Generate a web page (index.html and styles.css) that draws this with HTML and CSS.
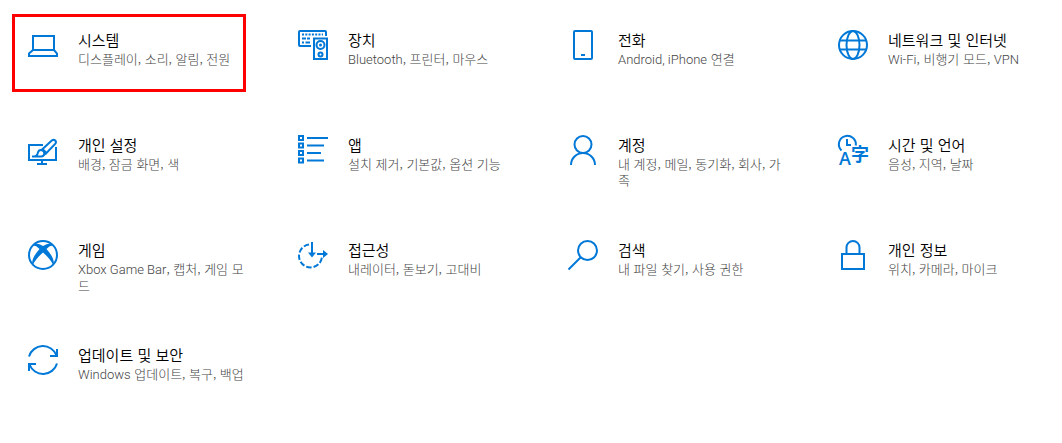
FILE: index.html
```html
<!DOCTYPE html>
<html lang="ko">
<head>
<meta charset="utf-8">
<meta name="viewport" content="width=device-width, initial-scale=1">
<title>Windows 설정</title>
<link rel="stylesheet" href="styles.css">
</head>
<body>
<main class="settings">
  <a class="tile tile-selected" href="#system">
    <svg class="icon" viewBox="0 0 30 30" aria-hidden="true"><path d="M5 6h21v14H5zM5 20l-4 3.500V26h28v-2.500L26 20"/></svg>
    <span class="label"><span class="title">시스템</span><span class="desc">디스플레이, 소리, 알림, 전원</span></span>
  </a>
  <a class="tile" href="#devices">
    <svg class="icon" viewBox="0 0 30 30" aria-hidden="true"><path d="M13 16H2q-1 0-1-1V2q0-1 1-1h25q1 0 1 1v4"/><path stroke-dasharray="2 1.3" d="M4 4.500h21"/><path d="M4 8.500h4M9 8.500h3M4 12.500h2M7.500 12.500H12M16 8.500h13V29H16z"/><circle cx="22.500" cy="15" r="4"/><circle class="solid" cx="22.500" cy="15" r="1.500"/><circle cx="22.500" cy="24.500" r="2"/></svg>
    <span class="label"><span class="title">장치</span><span class="desc"><span class="latin">Bluetooth</span>, 프린터, 마우스</span></span>
  </a>
  <a class="tile" href="#phone">
    <svg class="icon" viewBox="0 0 30 30" aria-hidden="true"><rect x="6" y="1" width="18" height="28" rx="1"/><path d="M13 25h4"/></svg>
    <span class="label"><span class="title">전화</span><span class="desc"><span class="latin">Android, iPhone</span> 연결</span></span>
  </a>
  <a class="tile" href="#network">
    <svg class="icon" viewBox="0 0 30 30" aria-hidden="true"><circle cx="15" cy="15" r="14"/><ellipse cx="15" cy="15" rx="6.500" ry="14"/><path d="M2 10.500h26M2 19.500h26"/></svg>
    <span class="label"><span class="title">네트워크 및 인터넷</span><span class="desc"><span class="latin">Wi-Fi</span>, 비행기 모드, <span class="latin">VPN</span></span></span>
  </a>
  <a class="tile" href="#personalization">
    <svg class="icon" viewBox="0 0 30 30" aria-hidden="true"><path d="M15 10H1v15h27V12M14 25v4M9 29h10"/><path d="M4 21.500h9a3.200 3.200 0 1 0-3-4c-.8 3-2 4-4 4M13 15.500l11-10.200q1.800-1.200 3.200.2t.2 3.200L17 19.500M15 14.500l3.500 3.500"/></svg>
    <span class="label"><span class="title">개인 설정</span><span class="desc">배경, 잠금 화면, 색</span></span>
  </a>
  <a class="tile" href="#apps">
    <svg class="icon" viewBox="0 0 30 30" aria-hidden="true"><path d="M1 1h4v4H1zM1 8.500h4v4H1zM1 16h4v4H1zM1 23.500h4v4H1zM9 3h21M9 10.500h17M9 18h14M9 25.500h17"/></svg>
    <span class="label"><span class="title">앱</span><span class="desc">설치 제거, 기본값, 옵션 기능</span></span>
  </a>
  <a class="tile" href="#accounts">
    <svg class="icon" viewBox="0 0 30 30" aria-hidden="true"><circle cx="15" cy="9.500" r="8.500"/><path d="M3 30a12 12 0 0 1 24 0"/></svg>
    <span class="label"><span class="title">계정</span><span class="desc">내 계정, 메일, 동기화, 회사, 가족</span></span>
  </a>
  <a class="tile" href="#time">
    <svg class="icon" viewBox="0 0 30 30" aria-hidden="true"><path d="M3.500 15.500A8.500 8.500 0 1 1 17.800 10.500M9 4v6h4"/><text class="glyph-latin" x="1" y="30">A</text><text class="glyph-han" x="13" y="26">字</text></svg>
    <span class="label"><span class="title">시간 및 언어</span><span class="desc">음성, 지역, 날짜</span></span>
  </a>
  <a class="tile" href="#gaming">
    <svg class="icon" viewBox="0 0 30 30" aria-hidden="true"><circle cx="15" cy="15" r="14"/><path class="solid" d="M6 4.500C9 2.800 12 4 15 6c3-2 6-3.200 9-1.500l1 1.500c-2-.8-4 .5-6.500 3C23 14 27 20 25.500 25.500 23 20 19 16 15 12.500 11 16 7 20 4.500 25.500 3 20 7 14 11.500 9 9 6.500 7 5.200 5 6z"/></svg>
    <span class="label"><span class="title">게임</span><span class="desc"><span class="latin">Xbox Game Bar</span>, 캡처, 게임 모드</span></span>
  </a>
  <a class="tile" href="#access">
    <svg class="icon" viewBox="0 0 30 30" aria-hidden="true"><path stroke-dasharray="5.500 2" d="M11 4.500a11.500 11.500 0 1 0 13 12"/><path d="M14 2v14M19 14h9"/><path class="solid" d="M10 12.500h8L14 17.500zM25 10v8l5-4z"/></svg>
    <span class="label"><span class="title">접근성</span><span class="desc">내레이터, 돋보기, 고대비</span></span>
  </a>
  <a class="tile" href="#search">
    <svg class="icon" viewBox="0 0 30 30" aria-hidden="true"><circle cx="19.500" cy="10.500" r="9.500"/><path d="M12.500 17.500L.5 29.500"/></svg>
    <span class="label"><span class="title">검색</span><span class="desc">내 파일 찾기, 사용 권한</span></span>
  </a>
  <a class="tile" href="#privacy">
    <svg class="icon" viewBox="0 0 30 30" aria-hidden="true"><path d="M4 14h22v15H4zM8.500 14V7.500a6.500 6.500 0 0 1 13 0V14"/></svg>
    <span class="label"><span class="title">개인 정보</span><span class="desc">위치, 카메라, 마이크</span></span>
  </a>
  <a class="tile" href="#update">
    <svg class="icon" viewBox="0 0 30 30" aria-hidden="true"><path d="M1 11.500a14.500 14.500 0 0 1 27.500-1M29 4v7h-7M29 18.500a14.500 14.500 0 0 1-27.500 1M1 26v-7h7"/></svg>
    <span class="label"><span class="title">업데이트 및 보안</span><span class="desc"><span class="latin">Windows</span> 업데이트, 복구, 백업</span></span>
  </a>
</main>
</body>
</html>
```
FILE: styles.css
```css
body {
  margin: 0;
  background: #fff;
  color: #000;
  font-family: "Noto Sans CJK KR", sans-serif;
}

.settings {
  display: grid;
  grid-template-columns: repeat(4, 1fr);
  grid-auto-rows: minmax(78px, auto);
  gap: 27px 36px;
  padding: 14px 6px 14px 12px;
}

.tile {
  box-sizing: border-box;
  display: flex;
  align-items: flex-start;
  gap: 20px;
  padding: 13px 0 0 13px;
  border: 3px solid transparent;
  color: inherit;
  text-decoration: none;
}

.tile-selected {
  border-color: #f00;
}

.icon {
  flex: none;
  width: 30px;
  height: 30px;
  overflow: visible;
  fill: none;
  stroke: #0078d7;
  stroke-width: 2;
}

.icon .solid {
  fill: #0078d7;
  stroke: none;
}

.glyph-latin,
.glyph-han {
  fill: #0078d7;
  stroke: none;
}

.glyph-latin {
  font-family: "Open Sans", sans-serif;
  font-size: 18px;
  font-weight: 600;
}

.glyph-han {
  font-family: "Noto Sans CJK KR", sans-serif;
  font-size: 18px;
  font-weight: 700;
}

.label {
  display: flex;
  flex-direction: column;
  gap: 1px;
  min-width: 0;
}

.title {
  font-size: 15px;
  font-weight: 350;
  line-height: 20px;
}

.desc {
  margin-right: -3px;
  color: #444;
  font-size: 13px;
  font-weight: 300;
  line-height: 16px;
  word-break: break-all;
}

.latin {
  font-family: Roboto, sans-serif;
}
```
